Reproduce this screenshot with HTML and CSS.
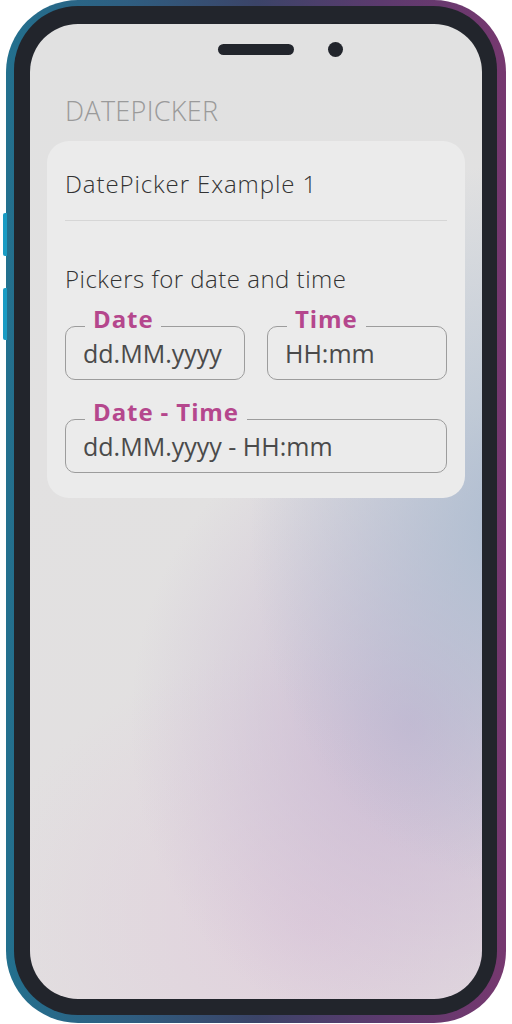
FILE: index.html
```html
<!DOCTYPE html>
<html lang="en">
<head>
<meta charset="utf-8">
<title>DatePicker</title>
<link rel="stylesheet" href="styles.css">
</head>
<body>
<div class="phone">
  <span class="side-btn side-btn-1"></span>
  <span class="side-btn side-btn-2"></span>
  <div class="bezel">
    <div class="screen">
      <div class="notch">
        <span class="speaker"></span>
        <span class="camera"></span>
      </div>
      <h1 class="page-title">DATEPICKER</h1>
      <section class="card">
        <h2 class="card-title">DatePicker Example 1</h2>
        <hr class="divider">
        <p class="card-text">Pickers for date and time</p>
        <div class="fields">
          <fieldset class="field">
            <legend class="field-label">Date</legend>
            <span class="field-value">dd.MM.yyyy</span>
          </fieldset>
          <fieldset class="field">
            <legend class="field-label">Time</legend>
            <span class="field-value">HH:mm</span>
          </fieldset>
          <fieldset class="field field-wide">
            <legend class="field-label">Date - Time</legend>
            <span class="field-value">dd.MM.yyyy - HH:mm</span>
          </fieldset>
        </div>
      </section>
    </div>
  </div>
</div>
</body>
</html>
```

FILE: styles.css
```css
* { box-sizing: border-box; }

html, body {
  margin: 0;
  padding: 0;
  background: #ffffff;
}

body {
  width: 512px;
  height: 1024px;
  overflow: hidden;
  font-family: "Open Sans", "Noto Sans", sans-serif;
}

.phone {
  position: relative;
  margin: 0 0 0 6px;
  width: 500px;
  height: 1023px;
  padding: 6px 9px 8px 8px;
  border-radius: 72px;
  background: linear-gradient(90deg, #23708e 0%, #2f5d80 25%, #3b4468 50%, #5c3a6e 75%, #76386f 100%);
}

.side-btn {
  position: absolute;
  left: -3px;
  width: 4px;
  border-radius: 2px 0 0 2px;
  background: #1a9cc4;
}
.side-btn-1 { top: 213px; height: 43px; }
.side-btn-2 { top: 288px; height: 52px; }

.bezel {
  height: 100%;
  padding: 18px 15px 16px 16px;
  border-radius: 64px;
  background: #22252c;
}

.screen {
  height: 100%;
  border-radius: 48px;
  overflow: hidden;
  padding: 0 17px;
  background:
    radial-gradient(ellipse 260px 360px at 480px 500px, rgba(172, 188, 208, 0.95), rgba(172, 188, 208, 0) 100%),
    radial-gradient(ellipse 280px 320px at 380px 700px, rgba(200, 182, 210, 0.9), rgba(200, 182, 210, 0) 100%),
    radial-gradient(ellipse 320px 280px at 280px 900px, rgba(224, 206, 220, 0.9), rgba(224, 206, 220, 0) 100%),
    linear-gradient(180deg, #e1e1e1 0%, #e2e1e1 45%, #e2dfe0 100%);
}

.notch {
  display: grid;
  grid-template-columns: 1fr 76px 1fr;
  align-items: center;
  height: 31px;
  padding-top: 18px;
  margin: 0 -17px;
}

.speaker {
  grid-column: 2;
  height: 11px;
  border-radius: 6px;
  background: #22252c;
}

.camera {
  grid-column: 3;
  justify-self: start;
  width: 15px;
  height: 15px;
  margin-left: 34px;
  border-radius: 50%;
  background: #22252c;
}

.page-title {
  margin: 41px 0 0;
  padding-left: 18px;
  height: 45px;
  font-size: 27px;
  line-height: 30px;
  font-weight: 300;
  color: #9a9a9a;
  letter-spacing: 0.3px;
}

.card {
  background: #ebebeb;
  border-radius: 22px;
  padding: 28px 18px 25px;
}

.card-title {
  margin: 0;
  font-size: 24px;
  line-height: 30px;
  font-weight: 300;
  letter-spacing: 0.9px;
  color: #333333;
}

.divider {
  margin: 21px 0 0;
  border: 0;
  height: 1px;
  background: #d6d6d6;
}

.card-text {
  margin: 43px 0 0;
  font-size: 24px;
  line-height: 30px;
  font-weight: 300;
  letter-spacing: 0.5px;
  color: #333333;
}

.fields {
  display: grid;
  grid-template-columns: 1fr 1fr;
  column-gap: 22px;
  row-gap: 18px;
  margin-top: 11px;
}

.field {
  margin: 0;
  min-width: 0;
  padding: 0 16px 0 17px;
  height: 75px;
  border: 1px solid #9c9c9c;
  border-radius: 10px;
}

.field-wide { grid-column: 1 / -1; }

.field-label {
  margin-left: 2px;
  padding: 0 8px 14px;
  font-size: 24px;
  line-height: 28px;
  font-weight: 700;
  letter-spacing: 0.9px;
  color: #b5478d;
}

.field-value {
  display: block;
  margin-top: -9px;
  font-size: 25px;
  line-height: 30px;
  font-weight: 400;
  color: #4a4a4a;
}
```
